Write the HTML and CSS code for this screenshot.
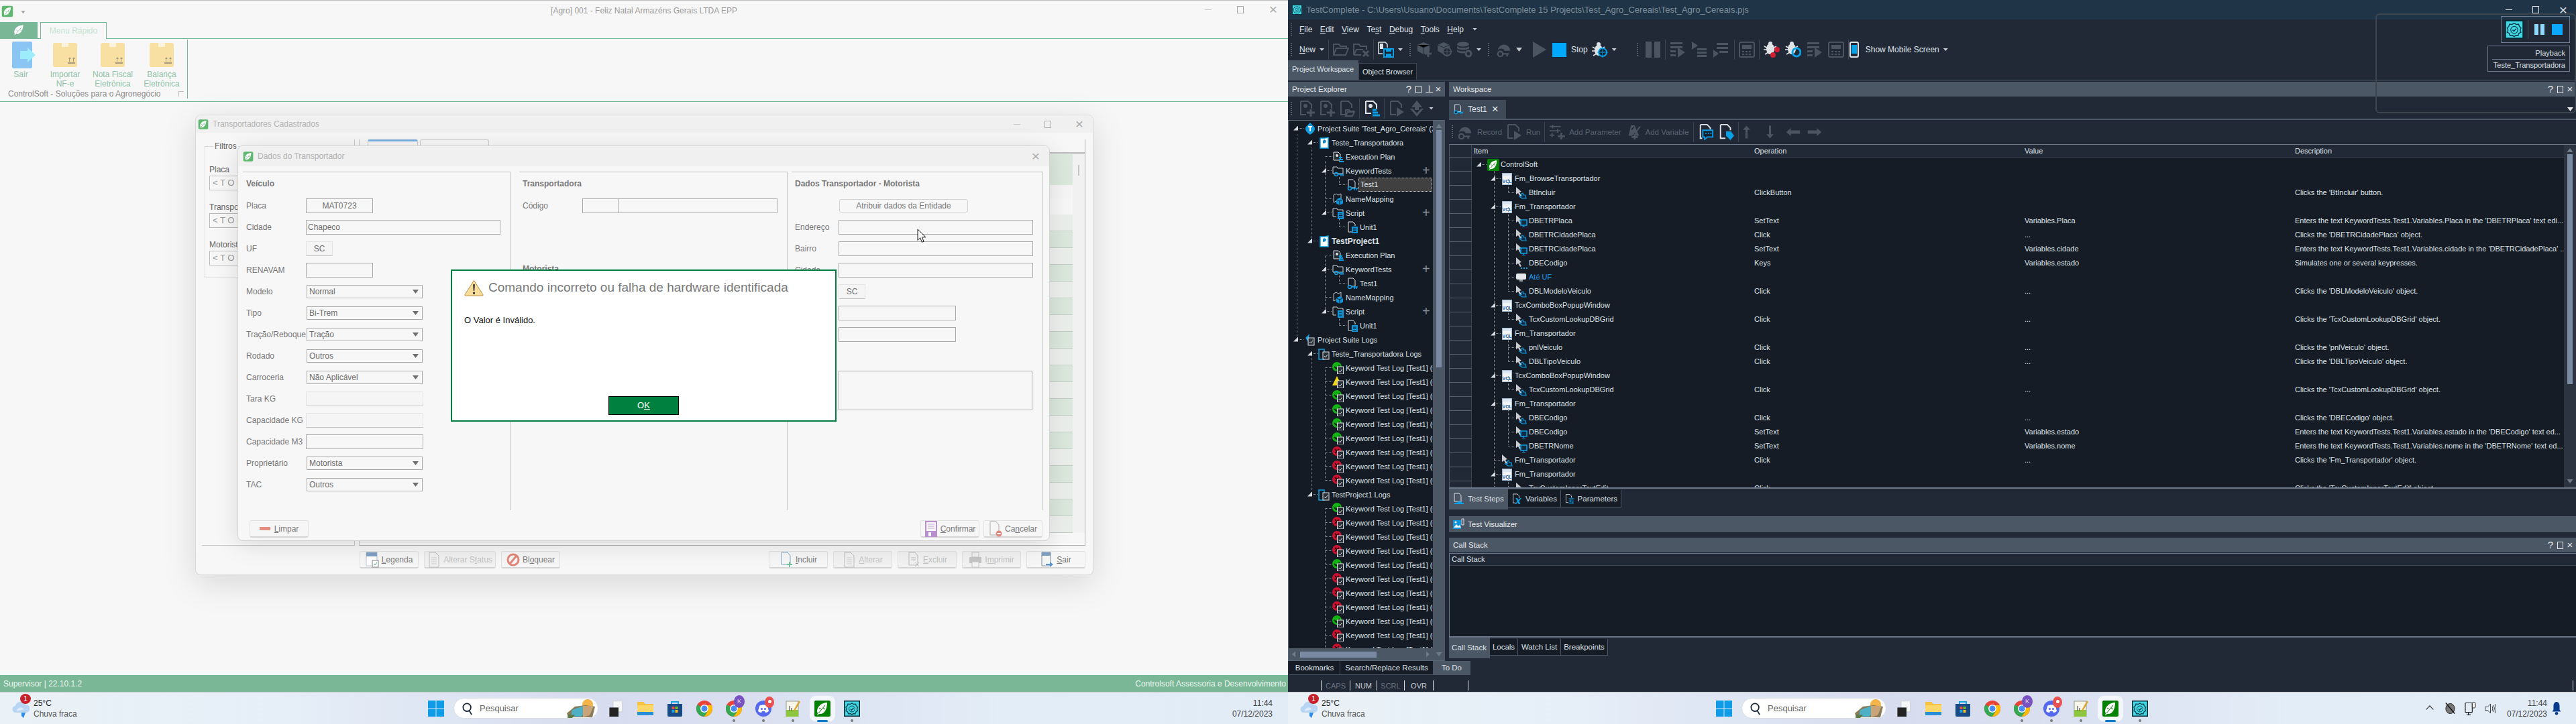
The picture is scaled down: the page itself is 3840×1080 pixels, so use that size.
FILE: index.html
```html
<!DOCTYPE html>
<html lang="pt-BR">
<head>
  <meta charset="UTF-8" />
  <title>ControlSoft e TestComplete</title>
  <link rel="stylesheet" href="styles.css">
</head>
<body>

<!-- icones usados nas duas telas -->
<svg class="sprites" width="0" height="0">
  <symbol id="leaf" viewBox="0 0 24 24">
    <rect x="1" y="1" width="22" height="22" rx="3" fill="#5fb86f"/>
    <path d="M19 4C11 4 6 8 5 14c0 2 .5 3 1 4l-1 2 2-1c7 1 11-6 12-15z" fill="#fff"/>
    <path d="M16 8L7 18M10 13l-2-2M13 11l3 2" stroke="#5fb86f" fill="none"/>
  </symbol>
  <symbol id="leaf-dark" viewBox="0 0 24 24">
    <rect width="24" height="24" rx="2" fill="#028102"/>
    <path d="M19 3C11 3 5 8 4 15c0 2 .5 3 1 4l-1 3 3-2c8 1 12-7 12-17z" fill="#fff"/>
    <path d="M16 7L6 19M10 13l-3-2M13 11l3 2" stroke="#028102" fill="none"/>
  </symbol>
  <symbol id="leaf-white" viewBox="0 0 24 24">
    <path d="M21 2C11 2 4 7 3 15c0 2 .5 3 1 4l-1 3 3-2c9 1 14-7 15-18z" fill="#fff"/>
    <path d="M17 7L6 19M10 14l-3-2M14 11l3 2" stroke="#7ab797" fill="none"/>
  </symbol>
  <symbol id="box" viewBox="0 0 36 36">
    <rect width="36" height="36" rx="3" fill="#f8e0a2"/>
    <rect x="13" width="10" height="6" fill="#fbf3de"/>
    <path d="M23 24l2-3 2 3zM29 24l2-3 2 3z" fill="#a79c82"/>
    <path d="M24.500 24v4M30.500 24v4" stroke="#a79c82"/>
    <rect x="22" y="29" width="11" height="2" fill="#a79c82"/>
  </symbol>
  <symbol id="door" viewBox="0 0 35 40">
    <path d="M0 2q0-2 2-2h26q2 0 2 2v36q0 2-2 2H2q-2 0-2-2z" fill="#8ac5f4"/>
    <path d="M12 14h11V9l12 11-12 11v-5H12z" fill="#9cecfb"/>
  </symbol>
  <symbol id="warn" viewBox="0 0 30 25">
    <path d="M15 1L1 23q-.5 1.500 1 1.500h26q1.500 0 1-1.500z" fill="#f8dc9a" stroke="#b98a3a"/>
    <path d="M13.500 7h3l-.7 10h-1.600zM13.500 19h3v3h-3z" fill="#333"/>
  </symbol>

  <symbol id="btn-legenda" viewBox="0 0 20 24">
    <rect x="1" y="1" width="16" height="20" fill="#fff" stroke="#b8c2cc"/>
    <rect x="1" y="1" width="16" height="6" fill="#7f9fc4"/>
    <rect x="10" y="13" width="9" height="10" fill="#fff" stroke="#888"/>
    <path d="M12 18l2 2 3-4" stroke="#57b383" fill="none"/>
  </symbol>
  <symbol id="btn-page" viewBox="0 0 20 24">
    <path d="M3 1h9l5 5v17H3z" fill="none" stroke="#bbb"/>
    <path d="M6 9h8M6 12h8M6 15h8M6 18h8" stroke="#ccc"/>
  </symbol>
  <symbol id="btn-block" viewBox="0 0 20 24">
    <circle cx="10" cy="12" r="8" fill="none" stroke="#e28779" stroke-width="3"/>
    <path d="M5 18L15 6" stroke="#e28779" stroke-width="3"/>
  </symbol>
  <symbol id="btn-add" viewBox="0 0 20 24">
    <path d="M3 1h9l4 5v13H3z" fill="none" stroke="#7fa6cc"/>
    <path d="M15 15v8M11 19h8" stroke="#6fc59a" stroke-width="2"/>
  </symbol>
  <symbol id="btn-del" viewBox="0 0 20 24">
    <path d="M3 1h9l4 5v14H3z" fill="none" stroke="#bbb"/>
    <path d="M6 9h7M6 12h7M12 16l6 6M18 16l-6 6" stroke="#bbb"/>
  </symbol>
  <symbol id="btn-print" viewBox="0 0 20 24">
    <rect x="5" y="1" width="10" height="7" fill="none" stroke="#c4c4c4"/>
    <rect x="1" y="8" width="18" height="9" rx="1" fill="#c4c4c4"/>
    <rect x="5" y="15" width="10" height="8" fill="#f4f4f4" stroke="#c4c4c4"/>
  </symbol>
  <symbol id="btn-exit" viewBox="0 0 20 24">
    <path d="M2 1h13v20H2z" fill="none" stroke="#7c8a98"/>
    <rect x="2" y="1" width="13" height="5" fill="#7f9fc4"/>
    <path d="M8 18h6v-3l5 4-5 4v-3H8z" fill="#5b94cd"/>
  </symbol>
  <symbol id="btn-save" viewBox="0 0 20 24">
    <path d="M2 1h16v22H2z" fill="none" stroke="#b98fd0" stroke-width="2"/>
    <path d="M5 5h10M5 8h10M5 11h10" stroke="#c9a8dc"/>
    <rect x="2" y="15" width="16" height="8" fill="#b98fd0"/>
    <rect x="6" y="17" width="4" height="6" fill="#f7f7f7"/>
  </symbol>
  <symbol id="btn-cancel" viewBox="0 0 20 24">
    <path d="M2 1h9l4 5v15H2z" fill="none" stroke="#aaa"/>
    <circle cx="15" cy="19" r="4.500" fill="#e28779"/>
    <rect x="12.500" y="18" width="5" height="2" fill="#fff"/>
  </symbol>

  <!-- testcomplete -->
  <symbol id="tc" viewBox="0 0 24 24">
    <rect width="24" height="24" fill="#062a36"/>
    <rect x="1.500" y="1.500" width="21" height="21" fill="#42d8e6"/>
    <path d="M12 4l2.500 1.500 3-.3 1 2.800 2 2-1 2.800 1 2.700-2.600 1.500-1 2.800-3-.3L12 21l-2.400-1.500-3 .3-1-2.800-2.600-1.500 1-2.700-1-2.800 2-2 1-2.800 3 .3z" fill="none" stroke="#0d3d4a" stroke-width="1.300"/>
    <circle cx="12" cy="12.500" r="4.500" fill="none" stroke="#0d3d4a"/>
    <path d="M9.800 12.500l1.700 1.700 3-3.200" fill="none" stroke="#0d3d4a" stroke-width="1.300"/>
  </symbol>
  <symbol id="suite" viewBox="0 0 18 18">
    <path d="M9 0l6 6c3 4-1 9-6 12C4 15 0 10 3 6z" fill="#129bde"/>
    <path d="M6 6h6M9 6v7" stroke="#fff" stroke-width="2"/>
  </symbol>
  <symbol id="proj" viewBox="0 0 18 18">
    <path d="M3 2h7l5-1v16H3z" fill="#fff" stroke="#0aa0e6" stroke-width="1.500"/>
    <path d="M9 4l3 2-1 3-4 1V6z" fill="#0e86c8"/>
  </symbol>
  <symbol id="plan" viewBox="0 0 18 18">
    <path d="M2 2h7l3 3v9H2z" fill="#2a3038" stroke="#dfe3e8"/>
    <circle cx="7" cy="7" r="2" fill="#dfe3e8"/>
    <path d="M10 10h5M10 13h6M10 16h7" stroke="#0aa0e6" stroke-width="2"/>
  </symbol>
  <symbol id="folder-key" viewBox="0 0 18 18">
    <path d="M1 3h6l1 2h8v8H1z" fill="none" stroke="#cfd4da"/>
    <circle cx="6" cy="14" r="2.500" fill="none" stroke="#0aa0e6" stroke-width="1.500"/>
    <path d="M9 14h8M13 14v3M16 14v3" stroke="#0aa0e6" stroke-width="1.500"/>
  </symbol>
  <symbol id="page-key" viewBox="0 0 18 18">
    <path d="M3 1h7l3 3v9H3z" fill="none" stroke="#dfe3e8"/>
    <circle cx="5" cy="14" r="2.500" fill="#131a23" stroke="#0aa0e6" stroke-width="1.500"/>
    <path d="M8 14h9M12 14v3M15 14v3" stroke="#0aa0e6" stroke-width="1.500"/>
  </symbol>
  <symbol id="map" viewBox="0 0 18 18">
    <path d="M2 3l4-2 3 2 4-2v8M2 3v11l4-2" fill="none" stroke="#bfc5cc"/>
    <path d="M11 7l5 2.500v6L11 18l-5-2.500v-6z" fill="#0e95dc"/>
    <path d="M6 9.500l5 2.500 5-2.500M11 12v6" stroke="#131a23" fill="none"/>
  </symbol>
  <symbol id="folder-script" viewBox="0 0 18 18">
    <path d="M1 2h6l1 2h8v3M1 2v12h5" fill="none" stroke="#cfd4da"/>
    <rect x="8" y="7" width="9" height="11" fill="#0e95dc"/>
    <path d="M10 10h5M10 12.500h5M10 15h5" stroke="#131a23"/>
  </symbol>
  <symbol id="unit" viewBox="0 0 18 18">
    <path d="M3 1h7l3 3v3M3 1v15h5" fill="none" stroke="#dfe3e8"/>
    <rect x="8" y="8" width="9" height="10" fill="#0e95dc"/>
    <path d="M10 11h5M10 13h5M10 15.500h5" stroke="#131a23"/>
  </symbol>
  <symbol id="log-suite" viewBox="0 0 18 18">
    <path d="M8 0L2 6l4 6" fill="#129bde"/>
    <rect x="6" y="6" width="9" height="11" fill="#2a3038" stroke="#dfe3e8"/>
    <path d="M8 12l2 2 3-4" stroke="#dfe3e8" fill="none"/>
  </symbol>
  <symbol id="log-proj" viewBox="0 0 18 18">
    <path d="M1 2h8v15H1z" fill="none" stroke="#0aa0e6" stroke-width="1.500"/>
    <rect x="7" y="6" width="9" height="11" fill="#2a3038" stroke="#dfe3e8"/>
    <path d="M9 12l2 2 3-4" stroke="#dfe3e8" fill="none"/>
  </symbol>
  <symbol id="log-g" viewBox="0 0 18 18">
    <circle cx="7" cy="7" r="7" fill="#12b312"/>
    <path d="M3 7l3 3 5-5" stroke="#0e2a12" stroke-width="2" fill="none"/>
    <rect x="7.500" y="7" width="9" height="11" fill="#2a3038" stroke="#dfe3e8"/>
    <path d="M9.500 13l2 2 3-4" stroke="#dfe3e8" fill="none"/>
  </symbol>
  <symbol id="log-y" viewBox="0 0 18 18">
    <path d="M7 0l7 14H0z" fill="#f3d610"/>
    <rect x="7.500" y="7" width="9" height="11" fill="#2a3038" stroke="#dfe3e8"/>
    <path d="M9.500 13l2 2 3-4" stroke="#dfe3e8" fill="none"/>
  </symbol>
  <symbol id="log-r" viewBox="0 0 18 18">
    <circle cx="7" cy="7" r="7" fill="#cc1230"/>
    <path d="M4 4l6 6M10 4l-6 6" stroke="#3a0a12" stroke-width="2"/>
    <rect x="7.500" y="7" width="9" height="11" fill="#2a3038" stroke="#dfe3e8"/>
    <path d="M9.500 13l2 2 3-4" stroke="#dfe3e8" fill="none"/>
  </symbol>
  <symbol id="vcl" viewBox="0 0 16 18">
    <rect x=".5" y=".5" width="14" height="17" fill="#f2f5f8" stroke="#9fb7cf"/>
    <rect x="1" y="1" width="13" height="4" fill="#dce6f0"/>
    <text x="7.500" y="15" font-family="Liberation Sans" font-size="7" font-weight="bold" fill="#1260a8" text-anchor="middle">VCL</text>
  </symbol>
  <symbol id="click" viewBox="0 0 18 18">
    <path d="M1 0l8 7-3 1 3 5-2 1-3-5-3 2z" fill="#c8ccd0"/>
    <path d="M9 10l2-1 1 3 3 0 1 5H10l-4-3 3-.5z" fill="#0f2a40" stroke="#0aa0e6" stroke-width="1.200"/>
  </symbol>
  <symbol id="type" viewBox="0 0 18 18">
    <path d="M1 0l8 7-3 1 3 5-2 1-3-5-3 2z" fill="#c8ccd0"/>
    <rect x="8" y="7" width="9" height="8" fill="#0f2a40" stroke="#0aa0e6" stroke-width="1.500"/>
    <path d="M12.500 15v2M10 17.500h5" stroke="#0aa0e6"/>
  </symbol>
  <symbol id="keys" viewBox="0 0 18 18">
    <path d="M1 0l8 7-3 1 3 5-2 1-3-5-3 2z" fill="#c8ccd0"/>
    <path d="M8 15h2v2H8zM12 15h2v2h-2zM16 15h2v2h-2z" fill="#0aa0e6"/>
  </symbol>
  <symbol id="note" viewBox="0 0 18 18">
    <rect x="1" y="3" width="15" height="9" rx="2" fill="#e6e9ec"/>
    <path d="M6 12v3h5v-3" fill="#8f979f"/>
  </symbol>
  <symbol id="t-open" viewBox="0 0 24 24">
    <path d="M1 20V4h8l2 3h9v3M1 20l4-10h18l-4 10z" fill="none" stroke="currentColor" stroke-width="2"/>
  </symbol>
  <symbol id="t-folder-x" viewBox="0 0 24 24">
    <path d="M1 20V4h8l2 3h9v5M1 20h11M1 20l4-8h10" fill="none" stroke="currentColor" stroke-width="2"/>
    <path d="M15 14l8 8M23 14l-8 8" stroke="currentColor" stroke-width="3"/>
  </symbol>
  <symbol id="t-save" viewBox="0 0 24 24">
    <path d="M1 1h10l3 3v5M1 1v17h6" fill="none" stroke="#dfe3e8" stroke-width="1.500"/>
    <rect x="3" y="3" width="5" height="8" fill="#dfe3e8"/>
    <path d="M9 11h14v12H9z" fill="#142230" stroke="#0aa0e6" stroke-width="2"/>
    <rect x="12" y="11" width="8" height="4" fill="#0aa0e6"/>
    <rect x="12" y="18" width="8" height="5" fill="#0aa0e6"/>
  </symbol>
  <symbol id="t-cube-plus" viewBox="0 0 24 24">
    <path d="M2 5l9-4 9 4v9l-9 5-9-5z" fill="currentColor"/>
    <path d="M2 5l9 4 9-4M11 9v10" stroke="#212836"/>
    <path d="M18 13v10M13 18h10" stroke="currentColor" stroke-width="3"/>
  </symbol>
  <symbol id="t-cube-target" viewBox="0 0 24 24">
    <path d="M2 5l9-4 9 4v9l-9 5-9-5z" fill="currentColor"/>
    <path d="M2 5l9 4 9-4" stroke="#212836" fill="none"/>
    <circle cx="16" cy="15" r="6" fill="#212836" stroke="currentColor" stroke-width="2"/>
    <path d="M16 7v16M8 15h16" stroke="currentColor"/>
  </symbol>
  <symbol id="t-db-gear" viewBox="0 0 24 24">
    <ellipse cx="10" cy="4" rx="9" ry="3.500" fill="currentColor"/>
    <path d="M1 7c2 3 16 3 18 0v3c-2 3-16 3-18 0zM1 12c2 3 10 3 12 2v3c-4 1-10 0-12-2z" fill="currentColor"/>
    <circle cx="18" cy="18" r="4" fill="none" stroke="currentColor" stroke-width="3"/>
  </symbol>
  <symbol id="t-record" viewBox="0 0 26 26">
    <path d="M3 15a10 10 0 1 1 20 0H14a6 6 0 0 0-11 0z" fill="currentColor"/>
    <circle cx="7" cy="20" r="4" fill="none" stroke="currentColor" stroke-width="2.500"/>
    <path d="M11 20h10M18 20v4" stroke="currentColor" stroke-width="2.500"/>
  </symbol>
  <symbol id="t-play" viewBox="0 0 24 24">
    <path d="M2 0l20 12L2 24z" fill="currentColor"/>
  </symbol>
  <symbol id="t-bug" viewBox="0 0 24 24">
    <ellipse cx="10" cy="13" rx="6" ry="8" fill="#dfe3e8"/>
    <circle cx="10" cy="4" r="3" fill="#dfe3e8"/>
    <path d="M1 8l5 3M19 8l-5 3M0 14h5M15 14h5M2 21l5-3M18 21l-5-3" stroke="#dfe3e8" stroke-width="1.500"/>
    <circle cx="16" cy="16" r="6" fill="#142230" stroke="#0aa0e6" stroke-width="2"/>
    <path d="M16 8v16M8 16h16" stroke="#0aa0e6"/>
  </symbol>
  <symbol id="t-bug-red" viewBox="0 0 24 24">
    <ellipse cx="10" cy="11" rx="6" ry="8" fill="#dfe3e8"/>
    <circle cx="10" cy="3" r="3" fill="#dfe3e8"/>
    <path d="M1 7l5 3M19 7l-5 3M0 12h5M2 19l5-3" stroke="#dfe3e8" stroke-width="1.500"/>
    <circle cx="20" cy="12" r="4" fill="#d31c30"/>
    <circle cx="14" cy="20" r="4" fill="#d31c30"/>
  </symbol>
  <symbol id="t-bug-blue" viewBox="0 0 24 24">
    <ellipse cx="10" cy="11" rx="6" ry="8" fill="#dfe3e8"/>
    <circle cx="10" cy="3" r="3" fill="#dfe3e8"/>
    <path d="M1 7l5 3M19 7l-5 3M0 12h5M2 19l5-3" stroke="#dfe3e8" stroke-width="1.500"/>
    <circle cx="17" cy="16" r="6" fill="none" stroke="#0aa0e6" stroke-width="3"/>
  </symbol>
  <symbol id="t-pause" viewBox="0 0 24 24">
    <path d="M1 0h9v24H1zM14 0h9v24h-9z" fill="currentColor"/>
  </symbol>
  <symbol id="t-step1" viewBox="0 0 24 24">
    <path d="M1 1h18v3H1zM1 7h18v3H1zM1 13h8v3H1zM1 19h8v3H1zM12 9l11 7-11 8z" fill="currentColor"/>
  </symbol>
  <symbol id="t-step2" viewBox="0 0 24 24">
    <path d="M1 0l9 6-9 6zM9 10h14v3H9zM9 15h14v3H9zM9 20h14v3H9z" fill="currentColor"/>
  </symbol>
  <symbol id="t-step3" viewBox="0 0 24 24">
    <path d="M6 2h17v3H6zM6 8h17v3H6zM10 14h13v3H10zM1 12l8 6-8 6z" fill="currentColor"/>
  </symbol>
  <symbol id="t-calc" viewBox="0 0 24 24">
    <rect x="1" y="1" width="22" height="22" rx="2" fill="none" stroke="currentColor" stroke-width="2"/>
    <rect x="5" y="5" width="14" height="6" fill="currentColor"/>
    <path d="M5 14h3v2H5zM10 14h3v2h-3zM15 14h3v2h-3zM5 18h3v2H5zM10 18h3v2h-3zM15 18h3v2h-3z" fill="currentColor"/>
  </symbol>
  <symbol id="t-phone" viewBox="0 0 24 24">
    <rect x="6" y="1" width="12" height="22" rx="2" fill="none" stroke="#dfe3e8" stroke-width="2"/>
    <rect x="8" y="5" width="8" height="13" fill="#0aa0e6"/>
  </symbol>
  <symbol id="p-page-plus" viewBox="0 0 24 24">
    <path d="M3 1h11l5 5v6M3 1v20h8" fill="none" stroke="currentColor" stroke-width="2"/>
    <circle cx="10" cy="8" r="3" fill="currentColor"/>
    <path d="M18 13v11M12 18h12" stroke="currentColor" stroke-width="3"/>
  </symbol>
  <symbol id="p-open" viewBox="0 0 24 24">
    <path d="M3 1h11l5 5v5M3 1v20h6" fill="none" stroke="currentColor" stroke-width="2"/>
    <path d="M10 23V14h5l2 2h6M10 23l3-6h10l-3 6z" fill="none" stroke="currentColor" stroke-width="2"/>
  </symbol>
  <symbol id="p-plan" viewBox="0 0 24 24">
    <path d="M3 1h11l5 5v6M3 1v18h8" fill="none" stroke="#dfe3e8" stroke-width="2"/>
    <circle cx="10" cy="8" r="3" fill="#dfe3e8"/>
    <path d="M13 14h6M13 18h8M13 22h11" stroke="#0aa0e6" stroke-width="3"/>
  </symbol>
  <symbol id="p-page-play" viewBox="0 0 24 24">
    <path d="M3 1h11l5 5v5M3 1v20h8" fill="none" stroke="currentColor" stroke-width="2"/>
    <path d="M12 10l11 7-11 7z" fill="currentColor"/>
  </symbol>
  <symbol id="p-run-all" viewBox="0 0 24 24">
    <path d="M12 0l8 10h-5v4H9v-4H4zM2 12l10 12 10-12h-4l-6 7-6-7z" fill="currentColor"/>
  </symbol>
  <symbol id="w-sliders" viewBox="0 0 26 24">
    <path d="M1 3h18M1 10h18M1 17h8M6 0v6M14 7v6M5 14v6" stroke="currentColor" stroke-width="2"/>
    <path d="M20 13v11M14 19h12" stroke="currentColor" stroke-width="3"/>
  </symbol>
  <symbol id="w-x" viewBox="0 0 26 24">
    <path d="M2 13L8 8h4l3-6M9 1h6l3 8 4-6h3l-6 8 3 7h-5l-2-5-4 5H5z" fill="currentColor"/>
    <path d="M15 15v9M10 20h10" stroke="currentColor" stroke-width="3"/>
  </symbol>
  <symbol id="w-comment" viewBox="0 0 26 26">
    <path d="M4 1h11l5 5v3M4 1v22h3" fill="none" stroke="#dfe3e8" stroke-width="2"/>
    <path d="M8 10h16v11H15l-4 4v-4H8z" fill="#142230" stroke="#0aa0e6" stroke-width="2"/>
    <path d="M12 15h2M16 15h2M20 15h2" stroke="#0aa0e6" stroke-width="2"/>
  </symbol>
  <symbol id="w-tag" viewBox="0 0 26 26">
    <path d="M4 1h11l5 5v4M4 1v22h8" fill="none" stroke="#dfe3e8" stroke-width="2"/>
    <path d="M13 12h8l5 7-6 7-7-7z" fill="#0aa0e6"/>
  </symbol>
  <symbol id="w-up" viewBox="0 0 14 24">
    <path d="M7 0l7 8H9v16H5V8H0z" fill="currentColor"/>
  </symbol>
  <symbol id="w-left" viewBox="0 0 24 14">
    <path d="M0 7l8-7v4h16v6H8v4z" fill="currentColor"/>
  </symbol>
  <symbol id="s-page" viewBox="0 0 18 18">
    <path d="M3 1h7l3 3v9H3z" fill="none" stroke="#dfe3e8"/>
    <path d="M3 16h14" stroke="#0aa0e6" stroke-width="2"/>
    <path d="M8 14h6" stroke="#0aa0e6" stroke-width="2"/>
  </symbol>
  <symbol id="s-var" viewBox="0 0 18 18">
    <path d="M3 1h7l3 3v4M3 1v15h4" fill="none" stroke="#dfe3e8"/>
    <path d="M7 8h3l2 3 3-3h2l-4 5 2 5h-3l-1-3-3 3H6l4-5z" fill="#0aa0e6"/>
  </symbol>
  <symbol id="s-param" viewBox="0 0 18 18">
    <path d="M3 1h7l3 3v3M3 1v15h4" fill="none" stroke="#dfe3e8"/>
    <path d="M8 9h10M8 13h10M8 17h10" stroke="#0aa0e6" stroke-width="1.500"/>
    <path d="M14 7v4M11 11v4M15 15v3" stroke="#0aa0e6" stroke-width="1.500"/>
  </symbol>
  <symbol id="s-visual" viewBox="0 0 18 18">
    <rect y="3" width="12" height="13" fill="#0e95dc"/>
    <path d="M1 14l4-5 3 3 2-2 2 4z" fill="#fff"/>
    <circle cx="4" cy="6" r="1.500" fill="#fff"/>
    <path d="M13 1h3v9h-3z" fill="none" stroke="#dfe3e8"/>
  </symbol>

  <!-- barra de tarefas -->
  <symbol id="win" viewBox="0 0 24 24">
    <path d="M0 0h11.500v11.500H0zM12.500 0H24v11.500H12.500zM0 12.500h11.500V24H0zM12.500 12.500H24V24H12.500z" fill="#0f9be8"/>
  </symbol>
  <symbol id="lens" viewBox="0 0 18 22">
    <circle cx="8" cy="9" r="6.500" fill="none" stroke="#1b2b3a" stroke-width="2"/>
    <path d="M12 15l4 6" stroke="#1b2b3a" stroke-width="2"/>
  </symbol>
  <symbol id="scene" viewBox="0 0 46 30">
    <circle cx="33" cy="9" r="8" fill="#f4b44a"/>
    <path d="M2 22l12-10 16-2 14 2-4 16H4z" fill="#8a7a5c"/>
    <path d="M10 17l16-6 14 2-10 6-6 8H8z" fill="#4db0c4"/>
    <path d="M26 11l16 0-6 14-10 3z" fill="#c8a478"/>
    <path d="M4 24h10l-4 5H3z" fill="#5f7a42"/>
  </symbol>
  <symbol id="taskview" viewBox="0 0 26 30">
    <rect x="8" y="1" width="17" height="20" fill="#f5f6f8" stroke="#ccc"/>
    <rect x="1" y="13" width="17" height="17" fill="#232323"/>
  </symbol>
  <symbol id="explorer" viewBox="0 0 24 24">
    <path d="M0 2h9l3 3h12v6H0z" fill="#f5c242"/>
    <path d="M0 7h24v15H0z" fill="#fbd668"/>
    <path d="M0 17h24v5H0z" fill="#2a8fd6"/>
  </symbol>
  <symbol id="store" viewBox="0 0 24 24">
    <path d="M7 5V2h10v3" fill="none" stroke="#18a4ec" stroke-width="2"/>
    <path d="M1 5h22v17q0 2-2 2H3q-2 0-2-2z" fill="#174a86"/>
    <path d="M7.500 9h4v4h-4z" fill="#e8553a"/>
    <path d="M12.500 9h4v4h-4z" fill="#7cbb2c"/>
    <path d="M7.500 14h4v4h-4z" fill="#18a4ec"/>
    <path d="M12.500 14h4v4h-4z" fill="#fbbb14"/>
  </symbol>
  <symbol id="chrome" viewBox="0 0 24 24">
    <circle cx="12" cy="12" r="12" fill="#e8443a"/>
    <path d="M12 12L1.600 6A12 12 0 0 0 12 24l5-8z" fill="#34a853"/>
    <path d="M12 7h10.900A12 12 0 0 1 12 24l5-8z" fill="#fbbc05"/>
    <circle cx="12" cy="12" r="6" fill="#fff"/>
    <circle cx="12" cy="12" r="4.500" fill="#4a8bf5"/>
  </symbol>
  <symbol id="discord" viewBox="0 0 24 24">
    <circle cx="12" cy="12" r="12" fill="#5568f0"/>
    <path d="M6 8c3-2 9-2 12 0l2 8c-2 1-3 2-5 2l-1-2h-4l-1 2c-2 0-3-1-5-2z" fill="#fff"/>
    <circle cx="9.500" cy="12.500" r="1.600" fill="#5568f0"/>
    <circle cx="14.500" cy="12.500" r="1.600" fill="#5568f0"/>
  </symbol>
  <symbol id="notes" viewBox="0 0 24 24">
    <rect x="2" y="1" width="18" height="23" fill="#f5f5ea" stroke="#9a9a8a"/>
    <rect x="2" y="14" width="18" height="10" fill="#8cc63f"/>
    <path d="M7 8v7M10 11v4" stroke="#333"/>
    <path d="M22 1l-8 14" stroke="#e2a32c" stroke-width="2.500"/>
  </symbol>
  <symbol id="tray-mute" viewBox="0 0 18 20">
    <ellipse cx="9" cy="10" rx="7" ry="8" fill="#777" stroke="#222"/>
    <path d="M2 1l14 17" stroke="#111" stroke-width="1.500"/>
  </symbol>
  <symbol id="tray-pc" viewBox="0 0 18 22">
    <rect x="1" y="2" width="11" height="15" rx="1" fill="none" stroke="#222" stroke-width="1.300"/>
    <rect x="12" y="1" width="5" height="9" rx="2" fill="#f4f4f4" stroke="#222"/>
    <path d="M6 17v4M3 21h7" stroke="#222" stroke-width="1.300"/>
  </symbol>
  <symbol id="tray-vol" viewBox="0 0 20 20">
    <path d="M1 7h4l5-5v16l-5-5H1z" fill="none" stroke="#222"/>
    <path d="M13 6q2 4 0 8M15.500 4q3 6 0 12M18 2q4 8 0 16" fill="none" stroke="#222"/>
  </symbol>
  <symbol id="bell" viewBox="0 0 14 22">
    <path d="M7 0c3 0 5 3 5 7v6l2 3H0l2-3V7c0-4 2-7 5-7z" fill="#053c8e"/>
    <circle cx="7" cy="19" r="2.500" fill="#053c8e"/>
  </symbol>
  <symbol id="cloud" viewBox="0 0 26 28">
    <path d="M6 20a5 5 0 0 1-1-10 8 8 0 0 1 15-2 6 6 0 0 1 1 12z" fill="#b8d6f4"/>
    <path d="M14 20h6l-3 8-3-3z" fill="#2c8bea"/>
    <path d="M7 18a6 6 0 0 1 11-3" fill="#dbeafb"/>
  </symbol>
</svg>

<!-- tela esquerda: sistema ControlSoft -->
<div class="screen agro">
  <div class="qat">
    <div class="qat-left">
      <svg class="qat-logo"><use href="#leaf"/></svg>
      <span class="qat-arrow"></span>
    </div>
    <div class="qat-title">[Agro] 001 - Feliz Natal Armazéns Gerais LTDA EPP</div>
    <div class="qat-ctrl">
      <span class="ctl-min"></span>
      <span class="ctl-max"></span>
      <span class="ctl-close">×</span>
    </div>
  </div>

  <div class="ribbon-tabs">
    <div class="app-btn"><svg><use href="#leaf-white"/></svg></div>
    <div class="ribbon-tab">Menu Rápido</div>
  </div>

  <div class="ribbon-body">
    <div class="ribbon-group">
      <div class="ribbon-items">
        <div class="ribbon-item"><svg class="ri-door"><use href="#door"/></svg><span>Sair</span></div>
        <div class="ribbon-item"><svg class="ri-box"><use href="#box"/></svg><span>Importar<br>NF-e</span></div>
        <div class="ribbon-item"><svg class="ri-box"><use href="#box"/></svg><span>Nota Fiscal<br>Eletrônica</span></div>
        <div class="ribbon-item"><svg class="ri-box"><use href="#box"/></svg><span>Balança<br>Eletrônica</span></div>
      </div>
      <div class="group-label"><span>ControlSoft - Soluções para o Agronegócio</span><i class="launcher"></i></div>
    </div>
  </div>

  <div class="mdi"></div>

  <div class="agro-status">
    <span>Supervisor | 22.10.1.2</span>
    <span>Controlsoft Assessoria e Desenvolvimento</span>
  </div>

  <div class="taskbar">
    <div class="weather">
      <svg class="w-ic"><use href="#cloud"/></svg>
      <b class="w-badge">1</b>
      <div class="w-text"><span>25°C</span><span>Chuva fraca</span></div>
    </div>
    <svg class="win"><use href="#win"/></svg>
    <div class="search">
      <svg class="lens"><use href="#lens"/></svg><span>Pesquisar</span>
      <svg class="scene"><use href="#scene"/></svg>
    </div>
    <div class="task-icons">
      <div class="task-icon"><svg><use href="#taskview"/></svg></div>
      <div class="task-icon"><svg><use href="#explorer"/></svg></div>
      <div class="task-icon"><svg><use href="#store"/></svg></div>
      <div class="task-icon"><svg><use href="#chrome"/></svg></div>
      <div class="task-icon dot"><svg><use href="#chrome"/></svg><b class="badge-k">K</b></div>
      <div class="task-icon dot"><svg><use href="#discord"/></svg><b class="badge-r"></b></div>
      <div class="task-icon dot"><svg><use href="#notes"/></svg></div>
      <div class="task-icon active"><svg><use href="#leaf-dark"/></svg></div>
      <div class="task-icon dot"><svg><use href="#tc"/></svg></div>
    </div>
    <div class="clock clock-left"><span>11:44</span><span>07/12/2023</span></div>
  </div>

  <!-- janela de fundo -->
  <div class="win-list">
    <div class="win-title">
      <svg><use href="#leaf"/></svg><span>Transportadores Cadastrados</span>
      <div class="win-ctrl"><span class="ctl-min"></span><span class="ctl-max"></span><span class="ctl-close">×</span></div>
    </div>
    <div class="list-body">
      <div class="pane-left">
        <fieldset class="filters">
          <legend>Filtros</legend>
          <label>Placa</label><div class="filter-input">&lt; T O D O S &gt;</div>
          <label>Transportadora</label><div class="filter-input">&lt; T O D O S &gt;</div>
          <label>Motorista</label><div class="filter-input">&lt; T O D O S &gt;</div>
        </fieldset>
      </div>
      <div class="pane-right">
        <div class="list-tabs">
          <div class="list-tab on">Placa</div>
          <div class="list-tab">Transportador</div>
        </div>
        <div class="grid-wrap">
          <div class="grid-rows">
            <div class="g-row tall"></div>
            <div class="g-row blank"></div>
            <div class="g-row sel"></div>
            <div class="g-row"></div><div class="g-row g"></div><div class="g-row"></div><div class="g-row g"></div>
            <div class="g-row"></div><div class="g-row g"></div><div class="g-row"></div><div class="g-row g"></div>
            <div class="g-row"></div><div class="g-row g"></div><div class="g-row"></div><div class="g-row g"></div>
            <div class="g-row"></div><div class="g-row g"></div><div class="g-row"></div><div class="g-row g"></div>
            <div class="g-row"></div><div class="g-row g"></div><div class="g-row"></div>
          </div>
          <div class="grid-scroll"><i></i></div>
        </div>
      </div>
    </div>
    <div class="list-actions">
      <div class="btn"><svg><use href="#btn-legenda"/></svg><span><u>L</u>egenda</span></div>
      <div class="btn off"><svg><use href="#btn-page"/></svg><span>Alterar S<u>t</u>atus</span></div>
      <div class="btn"><svg><use href="#btn-block"/></svg><span>Bl<u>o</u>quear</span></div>
      <div class="spacer"></div>
      <div class="btn"><svg><use href="#btn-add"/></svg><span><u>I</u>ncluir</span></div>
      <div class="btn off"><svg><use href="#btn-page"/></svg><span><u>A</u>lterar</span></div>
      <div class="btn off"><svg><use href="#btn-del"/></svg><span><u>E</u>xcluir</span></div>
      <div class="btn off"><svg><use href="#btn-print"/></svg><span>I<u>m</u>primir</span></div>
      <div class="btn"><svg><use href="#btn-exit"/></svg><span><u>S</u>air</span></div>
    </div>
  </div>

  <!-- cadastro -->
  <div class="win-form">
    <div class="win-title tall-title">
      <svg><use href="#leaf"/></svg><span>Dados do Transportador</span>
      <div class="win-ctrl"><span class="ctl-close">×</span></div>
    </div>
    <div class="form-cols">
      <div class="form-col veiculo">
        <h4>Veículo</h4>
        <div class="f-row"><label>Placa</label><div class="inp w100 center">MAT0723</div></div>
        <div class="f-row"><label>Cidade</label><div class="inp w290">Chapeco</div></div>
        <div class="f-row"><label>UF</label><div class="inp w40 center off">SC</div></div>
        <div class="f-row"><label>RENAVAM</label><div class="inp w100"></div></div>
        <div class="f-row"><label>Modelo</label><div class="sel">Normal</div></div>
        <div class="f-row"><label>Tipo</label><div class="sel">Bi-Trem</div></div>
        <div class="f-row"><label>Tração/Reboque</label><div class="sel">Tração</div></div>
        <div class="f-row"><label>Rodado</label><div class="sel">Outros</div></div>
        <div class="f-row"><label>Carroceria</label><div class="sel">Não Aplicável</div></div>
        <div class="f-row"><label>Tara KG</label><div class="inp w175 off"></div></div>
        <div class="f-row"><label>Capacidade KG</label><div class="inp w175 off"></div></div>
        <div class="f-row"><label>Capacidade M3</label><div class="inp w175"></div></div>
        <div class="f-row"><label>Proprietário</label><div class="sel">Motorista</div></div>
        <div class="f-row"><label>TAC</label><div class="sel">Outros</div></div>
      </div>
      <div class="form-col transp">
        <h4>Transportadora</h4>
        <div class="f-row"><label>Código</label><div class="inp w54"></div><div class="inp w237"></div></div>
        <h4 class="motorista">Motorista</h4>
      </div>
      <div class="form-col dados">
        <h4>Dados Transportador - Motorista</h4>
        <div class="f-row"><label></label><div class="btn-flat">Atribuir dados da Entidade</div></div>
        <div class="f-row"><label>Endereço</label><div class="inp w290"></div></div>
        <div class="f-row"><label>Bairro</label><div class="inp w290"></div></div>
        <div class="f-row"><label>Cidade</label><div class="inp w290"></div></div>
        <div class="f-row"><label></label><div class="inp w40 center off">SC</div></div>
        <div class="f-row"><label></label><div class="inp w175"></div></div>
        <div class="f-row"><label></label><div class="inp w175"></div></div>
        <div class="f-row f-area"><label></label><div class="inp area"></div></div>
      </div>
    </div>
    <div class="form-actions">
      <div class="btn limpar"><i class="dash"></i><span><u>L</u>impar</span></div>
      <div class="spacer"></div>
      <div class="btn"><svg><use href="#btn-save"/></svg><span><u>C</u>onfirmar</span></div>
      <div class="btn"><svg><use href="#btn-cancel"/></svg><span>Ca<u>n</u>celar</span></div>
    </div>
  </div>

  <!-- mensagem de erro -->
  <div class="dialog">
    <div class="dlg-title"><svg><use href="#warn"/></svg><span>Comando incorreto ou falha de hardware identificada</span></div>
    <div class="dlg-msg">O Valor é Inválido.</div>
    <div class="dlg-ok">O<u>K</u></div>
  </div>

  <svg class="cursor" viewBox="0 0 14 24"><path d="M1 1v18l4-4 3 7 3-1-3-7h6z" fill="#fff" stroke="#000"/></svg>
</div>

<!-- tela direita: TestComplete -->
<div class="screen tc">
  <div class="tc-title">
    <svg><use href="#tc"/></svg>
    <span>TestComplete - C:\Users\Usuario\Documents\TestComplete 15 Projects\Test_Agro_Cereais\Test_Agro_Cereais.pjs</span>
    <div class="tc-ctrl"><span class="ctl-min"></span><span class="ctl-max"></span><span class="ctl-close">×</span></div>
  </div>

  <div class="tc-menu">
    <i class="grip"></i>
    <a><u>F</u>ile</a><a><u>E</u>dit</a><a><u>V</u>iew</a><a>Te<u>s</u>t</a><a><u>D</u>ebug</a><a><u>T</u>ools</a><a><u>H</u>elp</a>
    <i class="arr"></i>
  </div>

  <div class="tc-toolbar">
    <i class="grip"></i>
    <span class="tb-text m5"><u>N</u>ew</span><i class="arr"></i>
    <i class="sep"></i>
    <svg class="ti"><use href="#t-open"/></svg>
    <svg class="ti"><use href="#t-folder-x"/></svg>
    <i class="sep"></i>
    <svg class="ti"><use href="#t-save"/></svg><i class="arr"></i>
    <i class="grip m4"></i>
    <svg class="ti m2"><use href="#t-cube-plus"/></svg>
    <svg class="ti"><use href="#t-cube-target"/></svg>
    <svg class="ti"><use href="#t-db-gear"/></svg><i class="arr"></i>
    <i class="grip m4"></i>
    <svg class="ti m4"><use href="#t-record"/></svg><i class="arr big"></i>
    <svg class="ti m8"><use href="#t-play"/></svg>
    <i class="stop"></i><span class="tb-text">Stop</span>
    <svg class="ti"><use href="#t-bug"/></svg><i class="arr"></i>
    <i class="grip m24"></i>
    <svg class="ti m4"><use href="#t-pause"/></svg>
    <i class="sep"></i>
    <svg class="ti"><use href="#t-step1"/></svg>
    <svg class="ti m2"><use href="#t-step2"/></svg>
    <svg class="ti m2"><use href="#t-step3"/></svg>
    <i class="sep m2"></i>
    <svg class="ti"><use href="#t-calc"/></svg>
    <i class="sep"></i>
    <svg class="ti"><use href="#t-bug-red"/></svg>
    <svg class="ti m2"><use href="#t-bug-blue"/></svg>
    <svg class="ti m2"><use href="#t-step1"/></svg>
    <svg class="ti m2"><use href="#t-calc"/></svg>
    <i class="sep"></i>
    <svg class="ti phone"><use href="#t-phone"/></svg>
    <span class="tb-text shown">Show Mobile Screen</span><i class="arr"></i>
  </div>

  <div class="tc-tabs">
    <div class="doc-tab on">Project Workspace</div>
    <div class="doc-tab">Object Browser</div>
  </div>

  <div class="tc-main">
    <div class="explorer">
      <div class="panel-head"><span>Project Explorer</span><div class="panel-btns"><b>?</b><i class="bx"></i><b>⊥</b><b>×</b></div></div>
      <div class="px-toolbar">
        <i class="grip"></i>
        <svg class="pi"><use href="#p-page-plus"/></svg>
        <svg class="pi"><use href="#p-page-plus"/></svg>
        <svg class="pi"><use href="#p-open"/></svg>
        <i class="sep"></i>
        <svg class="pi bright"><use href="#p-plan"/></svg>
        <i class="sep"></i>
        <svg class="pi"><use href="#p-page-play"/></svg>
        <svg class="pi"><use href="#p-run-all"/></svg>
        <i class="arr"></i>
      </div>
      <div class="tree-box">
        <div class="tree-col">
          <div class="tree">
            <svg class="guides" width="216" height="800">
              <path d="M12.500 20V327M33.500 40V180M33.500 348V558M54.500 60V138M54.500 200V285M54.500 368V537M54.500 578V800M75.500 84V96M75.500 147V159M75.500 226V243M75.500 288V306"/>
            </svg>
            <div class="t-row l0"><i class="exp open"></i><svg><use href="#suite"/></svg><span>Project Suite 'Test_Agro_Cereais' (2 projects)</span></div>
            <div class="t-row l1"><i class="exp open"></i><svg><use href="#proj"/></svg><span>Teste_Transportadora</span></div>
            <div class="t-row l2"><i class="exp"></i><svg><use href="#plan"/></svg><span>Execution Plan</span></div>
            <div class="t-row l2"><i class="exp open"></i><svg><use href="#folder-key"/></svg><span>KeywordTests</span><b class="plus">+</b></div>
            <div class="t-row l3"><i class="exp"></i><svg><use href="#page-key"/></svg><span class="t-sel">Test1</span></div>
            <div class="t-row l2"><i class="exp"></i><svg><use href="#map"/></svg><span>NameMapping</span></div>
            <div class="t-row l2"><i class="exp open"></i><svg><use href="#folder-script"/></svg><span>Script</span><b class="plus">+</b></div>
            <div class="t-row l3"><i class="exp"></i><svg><use href="#unit"/></svg><span>Unit1</span></div>
            <div class="t-row l1"><i class="exp open"></i><svg><use href="#proj"/></svg><span class="t-bold">TestProject1</span></div>
            <div class="t-row l2"><i class="exp"></i><svg><use href="#plan"/></svg><span>Execution Plan</span></div>
            <div class="t-row l2"><i class="exp open"></i><svg><use href="#folder-key"/></svg><span>KeywordTests</span><b class="plus">+</b></div>
            <div class="t-row l3"><i class="exp"></i><svg><use href="#page-key"/></svg><span>Test1</span></div>
            <div class="t-row l2"><i class="exp"></i><svg><use href="#map"/></svg><span>NameMapping</span></div>
            <div class="t-row l2"><i class="exp open"></i><svg><use href="#folder-script"/></svg><span>Script</span><b class="plus">+</b></div>
            <div class="t-row l3"><i class="exp"></i><svg><use href="#unit"/></svg><span>Unit1</span></div>
            <div class="t-row l0"><i class="exp open"></i><svg><use href="#log-suite"/></svg><span>Project Suite Logs</span></div>
            <div class="t-row l1"><i class="exp open"></i><svg><use href="#log-proj"/></svg><span>Teste_Transportadora Logs</span></div>
            <div class="t-row l2"><i class="exp"></i><svg><use href="#log-g"/></svg><span>Keyword Test Log [Test1] (07/12/2023)</span></div>
            <div class="t-row l2"><i class="exp"></i><svg><use href="#log-y"/></svg><span>Keyword Test Log [Test1] (07/12/2023)</span></div>
            <div class="t-row l2"><i class="exp"></i><svg><use href="#log-g"/></svg><span>Keyword Test Log [Test1] (07/12/2023)</span></div>
            <div class="t-row l2"><i class="exp"></i><svg><use href="#log-g"/></svg><span>Keyword Test Log [Test1] (07/12/2023)</span></div>
            <div class="t-row l2"><i class="exp"></i><svg><use href="#log-g"/></svg><span>Keyword Test Log [Test1] (07/12/2023)</span></div>
            <div class="t-row l2"><i class="exp"></i><svg><use href="#log-g"/></svg><span>Keyword Test Log [Test1] (07/12/2023)</span></div>
            <div class="t-row l2"><i class="exp"></i><svg><use href="#log-r"/></svg><span>Keyword Test Log [Test1] (07/12/2023)</span></div>
            <div class="t-row l2"><i class="exp"></i><svg><use href="#log-r"/></svg><span>Keyword Test Log [Test1] (07/12/2023)</span></div>
            <div class="t-row l2"><i class="exp"></i><svg><use href="#log-r"/></svg><span>Keyword Test Log [Test1] (07/12/2023)</span></div>
            <div class="t-row l1"><i class="exp open"></i><svg><use href="#log-proj"/></svg><span>TestProject1 Logs</span></div>
            <div class="t-row l2"><i class="exp"></i><svg><use href="#log-g"/></svg><span>Keyword Test Log [Test1] (07/12/2023)</span></div>
            <div class="t-row l2"><i class="exp"></i><svg><use href="#log-r"/></svg><span>Keyword Test Log [Test1] (07/12/2023)</span></div>
            <div class="t-row l2"><i class="exp"></i><svg><use href="#log-r"/></svg><span>Keyword Test Log [Test1] (07/12/2023)</span></div>
            <div class="t-row l2"><i class="exp"></i><svg><use href="#log-r"/></svg><span>Keyword Test Log [Test1] (07/12/2023)</span></div>
            <div class="t-row l2"><i class="exp"></i><svg><use href="#log-g"/></svg><span>Keyword Test Log [Test1] (07/12/2023)</span></div>
            <div class="t-row l2"><i class="exp"></i><svg><use href="#log-r"/></svg><span>Keyword Test Log [Test1] (07/12/2023)</span></div>
            <div class="t-row l2"><i class="exp"></i><svg><use href="#log-r"/></svg><span>Keyword Test Log [Test1] (07/12/2023)</span></div>
            <div class="t-row l2"><i class="exp"></i><svg><use href="#log-r"/></svg><span>Keyword Test Log [Test1] (07/12/2023)</span></div>
            <div class="t-row l2"><i class="exp"></i><svg><use href="#log-g"/></svg><span>Keyword Test Log [Test1] (07/12/2023)</span></div>
            <div class="t-row l2"><i class="exp"></i><svg><use href="#log-r"/></svg><span>Keyword Test Log [Test1] (07/12/2023)</span></div>
            <div class="t-row l2"><i class="exp"></i><svg><use href="#log-r"/></svg><span>Keyword Test Log [Test1] (07/12/2023)</span></div>
          </div>
          <div class="hscroll"><i class="tri-l"></i><b></b><i class="tri-r"></i></div>
        </div>
        <div class="vscroll tree-v"><i class="tri-u"></i><b></b><i class="tri-d"></i></div>
      </div>
      <div class="bottom-tabs px-tabs">
        <div class="b-tab">Bookmarks</div><div class="b-tab">Search/Replace Results</div><div class="b-tab on">To Do</div>
      </div>
    </div>

    <div class="workspace">
      <div class="panel-head"><span>Workspace</span><div class="panel-btns wide"><b>?</b><i class="bx"></i><b>×</b></div></div>
      <div class="ws-tabs">
        <div class="ws-tab"><svg><use href="#page-key"/></svg><span>Test1</span><b>×</b></div>
      </div>
      <div class="ws-toolbar">
        <i class="grip"></i>
        <svg class="wi"><use href="#t-record"/></svg><span>Record</span>
        <svg class="wi"><use href="#p-page-play"/></svg><span>Run</span>
        <i class="sep"></i>
        <svg class="wi"><use href="#w-sliders"/></svg><span>Add Parameter</span>
        <svg class="wi"><use href="#w-x"/></svg><span>Add Variable</span>
        <i class="sep"></i>
        <svg class="wi"><use href="#w-comment"/></svg>
        <svg class="wi"><use href="#w-tag"/></svg>
        <i class="sep"></i>
        <svg class="wa"><use href="#w-up"/></svg>
        <svg class="wa flip m18"><use href="#w-up"/></svg>
        <svg class="wh m12"><use href="#w-left"/></svg>
        <svg class="wh mirror m4"><use href="#w-left"/></svg>
      </div>
      <div class="steps">
        <div class="steps-main">
          <div class="step head"><div class="gut"></div><div>Item</div><div>Operation</div><div>Value</div><div>Description</div></div>
          <div class="steps-body">
            <svg class="guides" width="200" height="493">
              <path d="M66.500 18V493M87.500 32V51M87.500 74V198M87.500 222V240M87.500 264V303M87.500 326V345M87.500 369V429M87.500 474V493"/>
            </svg>
            <div class="step"><div class="gut"></div><div class="item s0"><i class="exp open"></i><svg><use href="#leaf-dark"/></svg><span>ControlSoft</span></div><div></div><div></div><div></div></div>
            <div class="step"><div class="gut"></div><div class="item s1"><i class="exp open"></i><svg><use href="#vcl"/></svg><span>Fm_BrowseTransportador</span></div><div></div><div></div><div></div></div>
            <div class="step"><div class="gut"></div><div class="item s2"><i class="exp"></i><svg><use href="#click"/></svg><span>BtIncluir</span></div><div>ClickButton</div><div></div><div>Clicks the 'BtIncluir' button.</div></div>
            <div class="step"><div class="gut"></div><div class="item s1"><i class="exp open"></i><svg><use href="#vcl"/></svg><span>Fm_Transportador</span></div><div></div><div></div><div></div></div>
            <div class="step"><div class="gut"></div><div class="item s2"><i class="exp"></i><svg><use href="#type"/></svg><span>DBETRPlaca</span></div><div>SetText</div><div>Variables.Placa</div><div>Enters the text KeywordTests.Test1.Variables.Placa in the 'DBETRPlaca' text edi...</div></div>
            <div class="step"><div class="gut"></div><div class="item s2"><i class="exp"></i><svg><use href="#click"/></svg><span>DBETRCidadePlaca</span></div><div>Click</div><div>...</div><div>Clicks the 'DBETRCidadePlaca' object.</div></div>
            <div class="step"><div class="gut"></div><div class="item s2"><i class="exp"></i><svg><use href="#type"/></svg><span>DBETRCidadePlaca</span></div><div>SetText</div><div>Variables.cidade</div><div>Enters the text KeywordTests.Test1.Variables.cidade in the 'DBETRCidadePlaca' ...</div></div>
            <div class="step"><div class="gut"></div><div class="item s2"><i class="exp"></i><svg><use href="#keys"/></svg><span>DBECodigo</span></div><div>Keys</div><div>Variables.estado</div><div>Simulates one or several keypresses.</div></div>
            <div class="step"><div class="gut"></div><div class="item s2"><i class="exp"></i><svg><use href="#note"/></svg><span class="link">Até UF</span></div><div></div><div></div><div></div></div>
            <div class="step"><div class="gut"></div><div class="item s2"><i class="exp"></i><svg><use href="#click"/></svg><span>DBLModeloVeiculo</span></div><div>Click</div><div>...</div><div>Clicks the 'DBLModeloVeiculo' object.</div></div>
            <div class="step"><div class="gut"></div><div class="item s1"><i class="exp open"></i><svg><use href="#vcl"/></svg><span>TcxComboBoxPopupWindow</span></div><div></div><div></div><div></div></div>
            <div class="step"><div class="gut"></div><div class="item s2"><i class="exp"></i><svg><use href="#click"/></svg><span>TcxCustomLookupDBGrid</span></div><div>Click</div><div>...</div><div>Clicks the 'TcxCustomLookupDBGrid' object.</div></div>
            <div class="step"><div class="gut"></div><div class="item s1"><i class="exp open"></i><svg><use href="#vcl"/></svg><span>Fm_Transportador</span></div><div></div><div></div><div></div></div>
            <div class="step"><div class="gut"></div><div class="item s2"><i class="exp"></i><svg><use href="#click"/></svg><span>pnlVeiculo</span></div><div>Click</div><div>...</div><div>Clicks the 'pnlVeiculo' object.</div></div>
            <div class="step"><div class="gut"></div><div class="item s2"><i class="exp"></i><svg><use href="#click"/></svg><span>DBLTipoVeiculo</span></div><div>Click</div><div>...</div><div>Clicks the 'DBLTipoVeiculo' object.</div></div>
            <div class="step"><div class="gut"></div><div class="item s1"><i class="exp open"></i><svg><use href="#vcl"/></svg><span>TcxComboBoxPopupWindow</span></div><div></div><div></div><div></div></div>
            <div class="step"><div class="gut"></div><div class="item s2"><i class="exp"></i><svg><use href="#click"/></svg><span>TcxCustomLookupDBGrid</span></div><div>Click</div><div>...</div><div>Clicks the 'TcxCustomLookupDBGrid' object.</div></div>
            <div class="step"><div class="gut"></div><div class="item s1"><i class="exp open"></i><svg><use href="#vcl"/></svg><span>Fm_Transportador</span></div><div></div><div></div><div></div></div>
            <div class="step"><div class="gut"></div><div class="item s2"><i class="exp"></i><svg><use href="#click"/></svg><span>DBECodigo</span></div><div>Click</div><div>...</div><div>Clicks the 'DBECodigo' object.</div></div>
            <div class="step"><div class="gut"></div><div class="item s2"><i class="exp"></i><svg><use href="#type"/></svg><span>DBECodigo</span></div><div>SetText</div><div>Variables.estado</div><div>Enters the text KeywordTests.Test1.Variables.estado in the 'DBECodigo' text ed...</div></div>
            <div class="step"><div class="gut"></div><div class="item s2"><i class="exp"></i><svg><use href="#type"/></svg><span>DBETRNome</span></div><div>SetText</div><div>Variables.nome</div><div>Enters the text KeywordTests.Test1.Variables.nome in the 'DBETRNome' text ed...</div></div>
            <div class="step"><div class="gut"></div><div class="item s1"><i class="exp"></i><svg><use href="#click"/></svg><span>Fm_Transportador</span></div><div>Click</div><div>...</div><div>Clicks the 'Fm_Transportador' object.</div></div>
            <div class="step"><div class="gut"></div><div class="item s1"><i class="exp open"></i><svg><use href="#vcl"/></svg><span>Fm_Transportador</span></div><div></div><div></div><div></div></div>
            <div class="step"><div class="gut"></div><div class="item s2"><i class="exp"></i><svg><use href="#click"/></svg><span>TcxCustomInnerTextEdit</span></div><div>Click</div><div>...</div><div>Clicks the 'TcxCustomInnerTextEdit' object.</div></div>
          </div>
        </div>
        <div class="vscroll steps-v"><i class="tri-u"></i><b></b><i class="tri-d"></i></div>
      </div>
      <div class="bottom-tabs step-tabs">
        <div class="b-tab on"><svg><use href="#s-page"/></svg>Test Steps</div>
        <div class="b-tab"><svg><use href="#s-var"/></svg>Variables</div>
        <div class="b-tab"><svg><use href="#s-param"/></svg>Parameters</div>
      </div>
      <div class="panel-head visual"><svg><use href="#s-visual"/></svg><span>Test Visualizer</span></div>
      <div class="panel-head stack"><span>Call Stack</span><div class="panel-btns wide"><b>?</b><i class="bx"></i><b>×</b></div></div>
      <div class="stack-table"><div class="stack-head">Call Stack</div></div>
      <div class="bottom-tabs call-tabs">
        <div class="b-tab on">Call Stack</div><div class="b-tab">Locals</div><div class="b-tab">Watch List</div><div class="b-tab">Breakpoints</div>
      </div>
    </div>
  </div>

  <div class="tc-status">
    <span class="st s-blank"></span><span class="st dim">CAPS</span><span class="st">NUM</span><span class="st dim">SCRL</span><span class="st">OVR</span><span class="st s-end"></span>
    <i class="st-end"></i>
  </div>

  <div class="taskbar">
    <div class="weather">
      <svg class="w-ic"><use href="#cloud"/></svg>
      <b class="w-badge">1</b>
      <div class="w-text"><span>25°C</span><span>Chuva fraca</span></div>
    </div>
    <svg class="win"><use href="#win"/></svg>
    <div class="search">
      <svg class="lens"><use href="#lens"/></svg><span>Pesquisar</span>
      <svg class="scene"><use href="#scene"/></svg>
    </div>
    <div class="task-icons">
      <div class="task-icon"><svg><use href="#taskview"/></svg></div>
      <div class="task-icon"><svg><use href="#explorer"/></svg></div>
      <div class="task-icon"><svg><use href="#store"/></svg></div>
      <div class="task-icon"><svg><use href="#chrome"/></svg></div>
      <div class="task-icon dot"><svg><use href="#chrome"/></svg><b class="badge-k">K</b></div>
      <div class="task-icon dot"><svg><use href="#discord"/></svg><b class="badge-r"></b></div>
      <div class="task-icon dot"><svg><use href="#notes"/></svg></div>
      <div class="task-icon active"><svg><use href="#leaf-dark"/></svg></div>
      <div class="task-icon dot"><svg><use href="#tc"/></svg></div>
    </div>
    <div class="tray">
      <i class="caret"></i>
      <svg><use href="#tray-mute"/></svg>
      <svg><use href="#tray-pc"/></svg>
      <svg><use href="#tray-vol"/></svg>
    </div>
    <div class="clock"><span>11:44</span><span>07/12/2023</span></div>
    <svg class="bell"><use href="#bell"/></svg>
  </div>

  <!-- miniatura do playback, flutua sobre a janela -->
  <div class="playback">
    <div class="pb-bar">
      <svg><use href="#tc"/></svg>
      <i class="pb-sep"></i>
      <i class="pb-pause"></i>
      <i class="pb-stop"></i>
    </div>
    <div class="pb-label"><span>Playback</span><span>Teste_Transportadora</span></div>
    <i class="pb-arrow"></i>
  </div>
</div>

</body>
</html>
```

FILE: styles.css
```css
* {
  box-sizing: border-box;
}

html, body {
  margin: 0;
  padding: 0;
}

body {
  width: 3840px;
  height: 1080px;
  display: flex;
  overflow: hidden;
  font-family: "Liberation Sans", sans-serif;
  font-size: 12px;
}

.sprites {
  position: absolute;
}

.screen {
  position: relative;
  width: 1920px;
  height: 1080px;
  display: flex;
  flex-direction: column;
  overflow: hidden;
}

.spacer {
  flex: 1;
}

/* ---------- sistema agro ---------- */

.agro {
  background: #f7f7f7;
  color: #777;
}

.qat {
  height: 33px;
  border-top: 1px solid #bdbdbd;
  display: grid;
  grid-template-columns: 1fr auto 1fr;
  align-items: center;
}

.qat-left {
  display: flex;
  align-items: center;
  padding-left: 2px;
}

.qat-logo {
  width: 18px;
  height: 18px;
}

.qat-arrow {
  width: 7px;
  height: 5px;
  margin-left: 11px;
  margin-top: 2px;
  background: #aaa;
  clip-path: polygon(0 0, 100% 0, 50% 100%);
}

.qat-title {
  color: #9a9a9a;
  font-size: 12px;
  margin-top: -2px;
}

.qat-ctrl {
  display: flex;
  justify-content: flex-end;
  align-items: center;
  gap: 38px;
  padding-right: 16px;
  margin-top: -6px;
}

.ctl-min {
  width: 10px;
  height: 1px;
  background: #c8c8c8;
}

.ctl-max {
  width: 10px;
  height: 11px;
  border: 1px solid #aaa;
}

.ctl-close {
  color: #aaa;
  font-size: 21px;
  line-height: 14px;
  font-weight: normal;
}

.ribbon-tabs {
  height: 25px;
  display: flex;
  border-bottom: 1px solid #7ab797;
}

.app-btn {
  width: 56px;
  background: #7ab797;
  display: flex;
  align-items: center;
  justify-content: center;
}

.app-btn svg {
  width: 18px;
  height: 20px;
}

.ribbon-tab {
  width: 99px;
  margin-left: 4px;
  height: 25px;
  background: #f7f7f7;
  border: 1px solid #7ab797;
  border-bottom: none;
  color: #c4e3d3;
  font-size: 12px;
  display: flex;
  align-items: center;
  justify-content: center;
}

.ribbon-body {
  height: 94px;
  border-bottom: 1px solid #7ab797;
  padding-top: 1px;
}

.ribbon-group {
  width: 280px;
  height: 88px;
  border-right: 1px solid #7ab797;
  display: flex;
  flex-direction: column;
}

.ribbon-items {
  display: grid;
  grid-template-columns: 62px 70px 72px 74px;
  height: 78px;
  padding-top: 3px;
}

.ribbon-item {
  display: flex;
  flex-direction: column;
  align-items: center;
  color: #8fc2a8;
  font-size: 12px;
  line-height: 14px;
  text-align: center;
  white-space: nowrap;
}

.ribbon-item span {
  margin-top: 2px;
}

.ri-door {
  width: 35px;
  height: 40px;
  margin-left: 8px;
}

.ri-box {
  width: 36px;
  height: 36px;
  margin-top: 2px;
  margin-bottom: 2px;
}

.group-label {
  display: flex;
  align-items: center;
  justify-content: space-between;
  padding: 0 5px 0 12px;
  font-size: 12px;
  color: #8a8a8a;
  white-space: nowrap;
}

.launcher {
  width: 8px;
  height: 8px;
  border: 1px solid #bbb;
  border-right: none;
  border-bottom: none;
}

.mdi {
  flex: 1;
}

.agro-status {
  height: 25px;
  background: #7ab797;
  color: #eaf6ef;
  font-size: 12px;
  display: flex;
  align-items: center;
  justify-content: space-between;
  padding: 0 3px 0 5px;
}

/* janelas sobre a area mdi */
.win-list {
  position: absolute;
  left: 291px;
  top: 171px;
  width: 1339px;
  height: 687px;
  background: #f7f7f7;
  border: 1px solid #d8d8d8;
  border-radius: 8px;
  box-shadow: 0 12px 50px rgba(0, 0, 0, 0.13);
  display: flex;
  flex-direction: column;
  overflow: hidden;
}

.win-form {
  position: absolute;
  left: 354px;
  top: 217px;
  width: 1211px;
  height: 590px;
  background: #f7f7f7;
  border: 1px solid #d4d4d4;
  border-radius: 8px;
  box-shadow: 0 6px 36px rgba(0, 0, 0, 0.12);
  display: flex;
  flex-direction: column;
  overflow: hidden;
}

.win-title {
  height: 26px;
  flex: none;
  background: #f0f0f0;
  display: flex;
  align-items: center;
  padding-left: 3px;
  font-size: 12px;
  color: #b3b3b3;
}

.tall-title {
  height: 30px;
  padding-left: 7px;
}

.win-title svg {
  width: 16px;
  height: 17px;
  margin-right: 6px;
}

.win-ctrl {
  margin-left: auto;
  display: flex;
  align-items: center;
  gap: 36px;
  padding-right: 14px;
}

.list-body {
  height: 616px;
  display: flex;
  gap: 6px;
  padding: 10px 11px 0 9px;
}

.pane-left {
  width: 228px;
  border-right: 1px solid #c8c8c8;
  border-bottom: 1px solid #c8c8c8;
  padding: 3px 0 0 4px;
  overflow: hidden;
}

.filters {
  margin: 0;
  height: 204px;
  padding: 20px 7px 0 6px;
  border: 1px solid #d8d8d8;
  display: flex;
  flex-direction: column;
  font-size: 12px;
  color: #666;
}

.filters legend {
  padding: 0 2px;
  margin-left: 6px;
}

.filters label {
  height: 17px;
  line-height: 17px;
}

.filter-input {
  height: 22px;
  flex: none;
  margin-bottom: 17px;
  border: 1px solid #bbb;
  padding-left: 4px;
  line-height: 20px;
  font-size: 13px;
  white-space: nowrap;
  color: #999;
}

.pane-right {
  flex: 1;
  border-left: 1px solid #c8c8c8;
  border-right: 1px solid #b0b0b0;
  border-bottom: 1px solid #b0b0b0;
  padding-bottom: 19px;
  display: flex;
  flex-direction: column;
}

.list-tabs {
  display: flex;
  height: 20px;
  padding-left: 12px;
  gap: 3px;
  border-bottom: 1px solid #bbb;
}

.list-tab {
  width: 75px;
  text-align: center;
  padding-top: 6px;
  border: 1px solid #ccc;
  border-bottom: none;
  border-radius: 3px 3px 0 0;
}

.list-tab.on {
  border-top: 3px solid #7aaede;
}

.list-tab + .list-tab {
  width: 103px;
}

.grid-wrap {
  flex: 1;
  display: flex;
  border-top: 1px solid #aaa;
  margin-right: 0;
}

.grid-rows {
  flex: 1;
  padding-top: 1px;
}

.g-row {
  height: 25px;
  background: linear-gradient(90deg, #f3f3f3 96%, #e8ede8);
  border-bottom: 1px solid #c5cec8;
}

.g-row.g {
  background: #dbe8dc;
}

.g-row.tall {
  height: 46px;
  background: #dbe8dc;
  border: none;
}

.g-row.blank {
  height: 20px;
  background: #f5f5f5;
  border: none;
}

.g-row.sel {
  height: 24px;
  background: #a9b8b2;
}

.grid-scroll {
  width: 18px;
  background: #f1f1f1;
  position: relative;
  padding: 17px 0 0 8px;
}

.grid-scroll i {
  display: block;
  width: 2px;
  height: 16px;
  background: #c4c4c4;
}

.list-actions {
  display: flex;
  gap: 8px;
  padding: 8px 11px 0 244px;
}

.form-actions {
  display: flex;
  gap: 6px;
  height: 26px;
  margin-top: 15px;
  padding: 0 10px 0 17px;
}

.btn {
  width: 88px;
  height: 26px;
  border: 1px solid #e2e2e2;
  border-bottom: 2px solid #d4d4d4;
  border-radius: 3px;
  background: #f6f6f6;
  display: flex;
  align-items: center;
  justify-content: center;
  gap: 4px;
  color: #7a7a7a;
  font-size: 12px;
  white-space: nowrap;
}

.btn svg {
  width: 20px;
  height: 24px;
  flex: none;
}

.btn.off {
  color: #c2c2c2;
  background: #f1f1f1;
}

.list-actions .btn:nth-child(2) {
  width: 107px;
}

.limpar {
  gap: 6px;
}

.dash {
  width: 16px;
  height: 5px;
  background: #e58e80;
}

.form-cols {
  height: 513px;
  flex: none;
  display: flex;
  padding: 8px 0 0 7px;
}

.form-col {
  height: 505px;
  border-top: 1px solid #c4c4c4;
  border-right: 1px solid #c4c4c4;
  padding: 10px 5px 0;
  display: flex;
  flex-direction: column;
  gap: 10px;
  color: #777;
  font-size: 12px;
}

.veiculo {
  width: 399px;
}

.transp {
  width: 400px;
  margin-left: 13px;
}

.dados {
  width: 375px;
  margin-left: 6px;
}

.form-col h4 {
  margin: 0 0 5px;
  height: 14px;
  line-height: 14px;
  font-size: 12px;
  color: #777;
}

.motorista {
  margin-top: 66px !important;
}

.f-row {
  display: flex;
  align-items: center;
  height: 22px;
  flex: none;
  white-space: nowrap;
}

.f-row label {
  width: 89px;
  flex: none;
}

.dados .f-row label {
  width: 65px;
}

.inp {
  height: 22px;
  border: 1px solid #aaa;
  padding: 0 2px;
  line-height: 20px;
  font-size: 12px;
  color: #6e6e6e;
}

.inp.off {
  border-color: #e4e4e4;
  border-bottom: 1px solid #c4c4c4;
  background: #f5f5f5;
}

.center {
  text-align: center;
}

.w40 {
  width: 40px;
}

.w54 {
  width: 54px;
}

.w100 {
  width: 100px;
}

.w175 {
  width: 175px;
}

.w237 {
  width: 237px;
  border-left: none;
}

.w290 {
  width: 290px;
}

.sel {
  width: 173px;
  height: 20px;
  margin-left: 1px;
  border: 1px solid #aaa;
  padding-left: 3px;
  line-height: 18px;
  font-size: 12px;
  color: #6e6e6e;
  position: relative;
}

.sel::after {
  content: "";
  position: absolute;
  right: 5px;
  top: 6px;
  width: 9px;
  height: 6px;
  background: #6e6e6e;
  clip-path: polygon(0 0, 100% 0, 50% 100%);
}

.btn-flat {
  width: 192px;
  height: 20px;
  margin-left: 1px;
  border: 1px solid #d4d4d4;
  border-radius: 3px;
  text-align: center;
  line-height: 18px;
  color: #777;
}

.f-area {
  height: 59px;
  margin-top: 33px;
}

.inp.area {
  width: 289px;
  height: 59px;
}

.dialog {
  position: absolute;
  left: 672px;
  top: 402px;
  width: 575px;
  height: 227px;
  background: #fff;
  border: 2px solid #007d41;
  display: flex;
  flex-direction: column;
  padding: 12px 18px 8px;
}

.dlg-title {
  display: flex;
  align-items: center;
  gap: 7px;
  height: 26px;
  font-size: 19px;
  color: #777;
  white-space: nowrap;
}

.dlg-title svg {
  width: 29px;
  height: 25px;
}

.dlg-msg {
  margin-top: 28px;
  font-size: 13px;
  color: #111;
}

.dlg-ok {
  margin: auto auto 0;
  width: 105px;
  height: 28px;
  background: #00803e;
  border: 1px solid #000;
  color: #fff;
  font-size: 13px;
  line-height: 26px;
  text-align: center;
}

.cursor {
  position: absolute;
  left: 1367px;
  top: 341px;
  width: 13px;
  height: 22px;
}

/* ---------- barra de tarefas ---------- */

.taskbar {
  height: 48px;
  flex: none;
  display: flex;
  align-items: center;
  position: relative;
  color: #333;
  border-top: 1px solid #c6cacf;
  background: linear-gradient(90deg, #eaf2f7 0%, #e6eef8 22%, #d7ddee 46%, #d9dfef 58%, #e3edf7 78%, #e2ecf7 100%);
}

.weather {
  width: 620px;
  margin-left: 18px;
  display: flex;
  align-items: center;
  position: relative;
  flex: none;
}

.w-ic {
  width: 26px;
  height: 28px;
}

.w-badge {
  position: absolute;
  left: 12px;
  top: -7px;
  width: 16px;
  height: 15px;
  border-radius: 50%;
  background: #c8202a;
  color: #fff;
  font-size: 11px;
  font-weight: normal;
  text-align: center;
  line-height: 15px;
}

.w-text {
  margin-left: 6px;
  display: flex;
  flex-direction: column;
  gap: 2px;
  font-size: 12px;
  line-height: 14px;
  color: #555;
}

.w-text span:first-child {
  color: #222;
}

.win {
  width: 24px;
  height: 24px;
  flex: none;
}

.search {
  width: 216px;
  height: 31px;
  margin-left: 14px;
  flex: none;
  background: #fff;
  border-radius: 16px;
  border: 1px solid #d8dce4;
  display: flex;
  align-items: center;
  padding-left: 12px;
  font-size: 13px;
  color: #666;
  overflow: hidden;
}

.lens {
  width: 16px;
  height: 20px;
  margin-right: 10px;
}

.scene {
  width: 46px;
  height: 30px;
  margin-left: auto;
  margin-right: 2px;
}

.task-icons {
  display: flex;
  gap: 20px;
  margin-left: 14px;
}

.task-icon {
  width: 24px;
  height: 24px;
  position: relative;
}

.task-icon svg {
  width: 24px;
  height: 24px;
  display: block;
}

.task-icon.dot::after {
  content: "";
  position: absolute;
  left: 10px;
  top: 28px;
  width: 4px;
  height: 4px;
  border-radius: 50%;
  background: #777;
}

.task-icon.active {
  background: #f3f6fb;
  border-radius: 3px;
  box-shadow: 0 0 0 7px #f3f6fb;
}

.task-icon.active::after {
  content: "";
  position: absolute;
  left: 4px;
  top: 29px;
  width: 16px;
  height: 3px;
  border-radius: 2px;
  background: #0b78d0;
}

.badge-k {
  position: absolute;
  left: 12px;
  top: -8px;
  width: 16px;
  height: 19px;
  border-radius: 50%;
  background: #7a51c0;
  color: #ddd;
  font-size: 9px;
  font-weight: normal;
  line-height: 19px;
  text-align: center;
}

.badge-r {
  position: absolute;
  left: 14px;
  top: -6px;
  width: 14px;
  height: 17px;
  border-radius: 50%;
  background: #e95050;
  border: 4px solid #e95050;
}

.badge-r::after {
  content: "";
  display: block;
  width: 5px;
  height: 5px;
  margin: 1px;
  border-radius: 50%;
  background: #fff;
}

.clock {
  display: flex;
  flex-direction: column;
  align-items: flex-end;
  gap: 2px;
  font-size: 12px;
  line-height: 14px;
  color: #444;
  margin-left: 16px;
}

.clock-left {
  margin-left: auto;
  margin-right: 23px;
}

.tray {
  margin-left: auto;
  display: flex;
  align-items: center;
  gap: 13px;
}

.tray svg {
  width: 17px;
  height: 22px;
}

.caret {
  width: 8px;
  height: 8px;
  border-left: 1px solid #222;
  border-top: 1px solid #222;
  transform: rotate(45deg);
  margin-right: 5px;
  margin-top: 3px;
}

.bell {
  width: 14px;
  height: 20px;
  margin: 0 22px 0 7px;
}

/* ---------- testcomplete ---------- */

.tc {
  background: #212836;
  color: #dfe3e8;
  font-size: 11px;
}

.tc-title {
  height: 29px;
  flex: none;
  background: #1f3547;
  display: flex;
  align-items: center;
  padding-left: 6px;
  gap: 6px;
  color: #7d8d9b;
  font-size: 13px;
}

.tc-title svg {
  width: 15px;
  height: 15px;
}

.tc-ctrl {
  margin-left: auto;
  display: flex;
  align-items: center;
  gap: 30px;
  padding-right: 13px;
}

.tc-ctrl .ctl-min {
  background: #dfe3e8;
}

.tc-ctrl .ctl-max {
  border-color: #dfe3e8;
}

.tc-ctrl .ctl-close {
  color: #dfe3e8;
}

.grip {
  width: 2px;
  height: 20px;
  flex: none;
  background: repeating-linear-gradient(180deg, #6a7480 0 1px, transparent 1px 3px);
}

.arr {
  width: 7px;
  height: 4px;
  flex: none;
  background: #c5cad0;
  clip-path: polygon(0 0, 100% 0, 50% 100%);
}

.arr.big {
  width: 9px;
  height: 6px;
}

.sep {
  width: 1px;
  height: 30px;
  flex: none;
  background: #3a4452;
}

.tc-menu {
  height: 29px;
  flex: none;
  display: flex;
  align-items: center;
  padding-left: 4px;
  font-size: 12px;
}

.tc-menu a {
  margin-left: 11.500px;
}

.tc-menu a:first-of-type {
  margin-left: 11px;
}

.tc-menu .arr {
  margin-left: 13px;
}

.tc-toolbar {
  height: 32px;
  flex: none;
  display: flex;
  align-items: center;
  gap: 6px;
  padding-left: 4px;
  color: #4b5561;
  font-size: 12px;
}

.ti {
  width: 24px;
  height: 24px;
  flex: none;
}

.tb-text {
  color: #dfe3e8;
  white-space: nowrap;
}

.shown {
  margin-left: -1px;
}

.phone {
  margin-left: -10px;
}

.m2 { margin-left: 2px; }
.m4 { margin-left: 4px; }
.m5 { margin-left: 5px; }
.m8 { margin-left: 8px; }
.m12 { margin-left: 12px; }
.m18 { margin-left: 18px; }
.m24 { margin-left: 24px; }

.stop {
  width: 23px;
  height: 23px;
  background: #00a8ff;
  border: 1px solid #0a2a44;
  flex: none;
}

.tc-tabs {
  height: 32px;
  flex: none;
  display: flex;
  align-items: flex-end;
  padding-bottom: 3px;
  box-shadow: inset 0 -2px 0 #212836, inset 0 -3px 0 #4c5765;
}

.doc-tab {
  height: 29px;
  white-space: nowrap;
}

.doc-tab.on {
  width: 105px;
  background: #4c5765;
  padding: 0 6px;
  line-height: 26px;
}

.doc-tab + .doc-tab {
  width: 87px;
  height: 25px;
  padding: 0;
  text-align: center;
  line-height: 24px;
  border: 1px solid #3a4452;
  border-bottom: none;
  background: #161c26;
}

.tc-main {
  flex: 1;
  display: flex;
  gap: 6px;
  min-height: 0;
}

.panel-head {
  height: 22px;
  flex: none;
  background: #4c5765;
  display: flex;
  align-items: center;
  padding-left: 6px;
  font-size: 11.500px;
  color: #e6e9ec;
}

.panel-btns {
  margin-left: auto;
  display: flex;
  align-items: center;
  gap: 5px;
  padding-right: 5px;
  font-size: 13px;
}

.panel-btns.wide {
  padding-right: 4px;
}

.panel-btns b {
  width: 10px;
  text-align: center;
  font-weight: normal;
  font-size: 15px;
  line-height: 14px;
}

.panel-btns .bx {
  width: 9px;
  height: 11px;
  border: 1px solid #e6e9ec;
}

.explorer {
  width: 234px;
  flex: none;
  display: flex;
  flex-direction: column;
}

.px-toolbar {
  height: 35px;
  flex: none;
  display: flex;
  align-items: center;
  gap: 6px;
  padding-left: 4px;
  color: #4b5561;
}

.px-toolbar .grip {
  margin-right: 4px;
}

.pi {
  width: 24px;
  height: 24px;
  flex: none;
}

.tree-box {
  height: 807px;
  flex: none;
  display: flex;
  border-top: 1px solid #5a6675;
  border-left: 1px solid #5a6675;
  border-bottom: 1px solid #5a6675;
}

.tree-col {
  width: 215px;
  display: flex;
  flex-direction: column;
}

.tree {
  flex: 1;
  background: #141b24;
  overflow: hidden;
  position: relative;
  padding-top: 1px;
  min-height: 0;
}

.guides {
  position: absolute;
  left: 0;
  top: 0;
  pointer-events: none;
}

.guides path {
  stroke: #8a939c;
  stroke-dasharray: 1 1;
  fill: none;
}

.t-row {
  height: 21px;
  display: flex;
  align-items: center;
  white-space: nowrap;
  position: relative;
}

.t-row.l0 { padding-left: 5px; }
.t-row.l1 { padding-left: 26px; }
.t-row.l2 { padding-left: 47px; }
.t-row.l3 { padding-left: 68px; }

.exp {
  width: 18px;
  height: 12px;
  flex: none;
  position: relative;
  background: repeating-linear-gradient(90deg, #8a939c 0 1px, transparent 1px 2px) no-repeat 7px center / 11px 1px;
}

.exp.open {
  background-position: 10px center;
  background-size: 8px 1px;
}

.exp.open::before {
  content: "";
  position: absolute;
  left: 2px;
  top: 2px;
  width: 7px;
  height: 7px;
  background: #d8dce0;
  clip-path: polygon(100% 0, 100% 100%, 0 100%);
}

.t-row svg, .item svg {
  width: 18px;
  height: 18px;
  flex: none;
  margin-right: 2px;
}

.plus {
  position: absolute;
  left: 199px;
  top: 1px;
  color: #8a939c;
  font-size: 20px;
  line-height: 18px;
  font-weight: normal;
  background: #141b24;
}

.t-sel {
  width: 110px;
  height: 21px;
  flex: none;
  margin-left: -2px;
  padding-left: 2px;
  line-height: 19px;
  background: #404040;
  border: 1px dotted #c8c8c8;
}

.t-bold {
  font-weight: bold;
  font-size: 12px;
}

.hscroll {
  height: 18px;
  flex: none;
  background: #4c5765;
  display: flex;
  align-items: center;
  padding: 0 5px;
}

.hscroll b {
  width: 114px;
  height: 9px;
  margin-left: 7px;
  background: #7a8aa2;
}

.tri-l, .tri-r, .tri-u, .tri-d {
  flex: none;
  background: #6f7a88;
}

.tri-l, .tri-r {
  width: 5px;
  height: 9px;
}

.tri-l { clip-path: polygon(100% 0, 100% 100%, 0 50%); }
.tri-r { clip-path: polygon(0 0, 0 100%, 100% 50%); margin-left: auto; }

.tri-u, .tri-d {
  width: 9px;
  height: 6px;
}

.tri-u { clip-path: polygon(50% 0, 100% 100%, 0 100%); }
.tri-d { clip-path: polygon(0 0, 100% 0, 50% 100%); margin-top: auto; margin-bottom: 6px; }

.vscroll {
  width: 18px;
  flex: none;
  background: #4c5765;
  display: flex;
  flex-direction: column;
  align-items: center;
  padding-top: 5px;
}

.vscroll b {
  width: 8px;
  margin-top: 3px;
  background: #7a8aa2;
}

.tree-v b {
  height: 354px;
}

.steps-v {
  background: #2c3442;
}

.steps-v b {
  height: 343px;
}

.bottom-tabs {
  display: flex;
  flex: none;
  align-items: flex-start;
}

.b-tab {
  flex: none;
  height: 25px;
  display: flex;
  align-items: center;
  padding: 0 5px;
  border-right: 1px solid #4c5765;
  border-bottom: 1px solid #4c5765;
  background: #161c26;
  white-space: nowrap;
  font-size: 11.500px;
}

.b-tab.on {
  background: #4c5765;
  border-color: #4c5765;
}

.px-tabs {
  padding-left: 2px;
}

.px-tabs .b-tab {
  height: 21px;
  padding: 0 8px;
}

.px-tabs .b-tab:nth-child(1) { width: 76px; justify-content: center; }
.px-tabs .b-tab:nth-child(2) { width: 139px; justify-content: center; padding: 0; }
.px-tabs .b-tab:nth-child(3) { width: 55px; justify-content: center; }

.workspace {
  flex: 1;
  min-width: 0;
  display: flex;
  flex-direction: column;
}

.ws-tabs {
  height: 33px;
  flex: none;
  display: flex;
  align-items: flex-end;
}

.ws-tab {
  width: 85px;
  height: 28px;
  background: #3f4a58;
  display: flex;
  align-items: center;
  padding-left: 6px;
  gap: 6px;
  font-size: 12px;
}

.ws-tab svg {
  width: 16px;
  height: 18px;
}

.ws-tab b {
  font-weight: normal;
  font-size: 17px;
  line-height: 14px;
  margin-left: 1px;
}

.ws-toolbar {
  height: 38px;
  flex: none;
  display: flex;
  align-items: center;
  gap: 6px;
  padding-left: 4px;
  border-top: 2px solid #4c5765;
  color: #4b5561;
  font-size: 11.500px;
}

.ws-toolbar span {
  color: #596470;
  white-space: nowrap;
}

.wi {
  width: 24px;
  height: 24px;
  flex: none;
}

.wa {
  width: 11px;
  height: 22px;
  flex: none;
}

.flip {
  transform: scaleY(-1);
}

.wh {
  width: 22px;
  height: 12px;
  flex: none;
}

.mirror {
  transform: scaleX(-1);
}

.steps {
  height: 514px;
  flex: none;
  display: flex;
  border-top: 1px solid #6a7788;
  border-bottom: 2px solid #6a7788;
  border-left: 1px solid #4c5765;
}

.steps-main {
  flex: 1;
  min-width: 0;
  background: #151c25;
}

.step {
  display: grid;
  grid-template-columns: 33px 421px 403px 403px 1fr;
  height: 21px;
  align-items: center;
  white-space: nowrap;
}

.step > div {
  overflow: hidden;
  height: 21px;
  line-height: 21px;
}

.step.head {
  height: 19px;
  background: #212836;
  border-bottom: 1px solid #3a4452;
}

.step.head > div {
  height: 19px;
  line-height: 18px;
}

.step.head > div:nth-child(2) {
  padding-left: 3px;
}

.gut {
  background: #212836;
  border-bottom: 1px solid #56606c;
  border-right: 1px solid #3a4452;
}

.steps-body {
  position: relative;
  height: 492px;
  overflow: hidden;
}

.step > .item {
  display: flex;
  align-items: center;
}

.item.s0 { padding-left: 5px; }
.item.s1 { padding-left: 26px; }
.item.s2 { padding-left: 47px; }

.link {
  color: #1a9cf0;
}

.step-tabs {
  height: 41px;
}

.step-tabs .b-tab {
  height: 26px;
  margin-top: 2px;
  padding-left: 5px;
  gap: 5px;
}

.step-tabs .b-tab svg {
  width: 18px;
  height: 18px;
}

.step-tabs .b-tab.on {
  width: 88px;
  height: 31px;
  margin-top: 0;
}

.step-tabs .b-tab:nth-child(2) { width: 79px; }
.step-tabs .b-tab:nth-child(3) { width: 90px; }

.visual svg {
  width: 18px;
  height: 18px;
  margin-right: 4px;
}

.visual {
  height: 24px;
}

.stack {
  margin-top: 8px;
}

.stack-table {
  height: 126px;
  margin-top: 1px;
  flex: none;
  background: #151c25;
  border: 1px solid #6a7788;
  border-bottom-width: 2px;
  border-right: none;
}

.stack-head {
  height: 18px;
  padding-left: 3px;
  line-height: 17px;
  background: #212836;
  border-bottom: 1px solid #3a4452;
}

.call-tabs .b-tab {
  height: 25px;
  margin-top: 2px;
}

.call-tabs .b-tab.on {
  width: 61px;
  height: 31px;
  margin-top: 0;
  justify-content: center;
  padding: 0;
}

.call-tabs .b-tab:nth-child(2) { width: 42px; justify-content: center; }
.call-tabs .b-tab:nth-child(3) { width: 64px; justify-content: center; }
.call-tabs .b-tab:nth-child(4) { width: 70px; justify-content: center; }

.tc-status {
  height: 25px;
  flex: none;
  display: flex;
  align-items: flex-start;
  padding-top: 8px;
  padding-left: 49px;
  color: #c8ccd2;
  font-size: 11px;
  position: relative;
}

.st {
  height: 15px;
  border-left: 1px solid #dfe3e8;
  text-align: center;
  line-height: 16px;
}

.st:nth-child(2) { width: 43px; }
.st:nth-child(3) { width: 40px; }
.st:nth-child(4) { width: 41px; }
.st:nth-child(5) { width: 43px; }

.s-blank {
  display: none;
}

.s-end {
  width: 53px;
  border-right: 1px solid #dfe3e8;
}

.dim {
  color: #6a7480;
}

.st-end {
  width: 1px;
  height: 15px;
  background: #dfe3e8;
  margin-left: auto;
  margin-right: 4px;
}

.playback {
  position: absolute;
  right: 0;
  top: 20px;
  width: 299px;
  height: 149px;
  border: 2px solid #3d454f;
  border-radius: 6px;
  display: flex;
  flex-direction: column;
  align-items: flex-end;
  padding: 2px 7px 0 0;
}

.pb-bar {
  width: 103px;
  height: 40px;
  border: 1px solid #6c7a90;
  display: flex;
  align-items: center;
  padding-left: 5px;
}

.pb-bar svg {
  width: 28px;
  height: 28px;
}

.pb-sep {
  width: 1px;
  height: 28px;
  margin-left: 6px;
  background: #4c5765;
}

.pb-pause {
  width: 15px;
  height: 16px;
  margin-left: 9px;
  background: linear-gradient(90deg, #8fd8ff 0 6px, transparent 6px 9px, #8fd8ff 9px);
}

.pb-stop {
  width: 16px;
  height: 16px;
  margin-left: 11px;
  background: #0aa8ff;
}

.pb-label {
  width: 123px;
  height: 39px;
  margin-top: 4px;
  border: 1px solid #6c7a90;
  display: flex;
  flex-direction: column;
  align-items: stretch;
  padding: 3px 6px 0;
  text-align: right;
  line-height: 15px;
  font-size: 11px;
  background: #212836;
}

.pb-label span:first-child {
  border-bottom: 1px solid #6c7a90;
  padding-bottom: 1px;
  margin-bottom: 1px;
}

.pb-arrow {
  position: absolute;
  right: 2px;
  bottom: 1px;
  width: 9px;
  height: 6px;
  background: #e6e9ec;
  clip-path: polygon(0 0, 100% 0, 50% 100%);
}
```
